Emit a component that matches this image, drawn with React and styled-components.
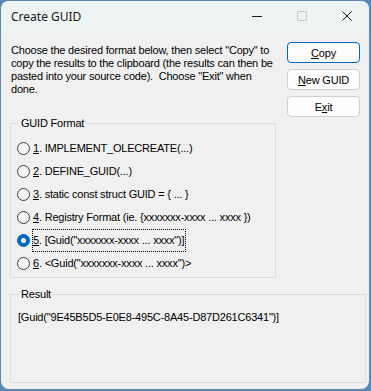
import React from 'react';
import styled, { createGlobalStyle } from 'styled-components';

const GlobalStyle = createGlobalStyle`
  html, body {
    margin: 0;
    padding: 0;
    background: #5a89b5;
  }
  body {
    width: 371px;
    height: 391px;
    overflow: hidden;
  }
`;

const Window = styled.div`
  margin: 1px 0 0 1px;
  width: 368px;
  height: 388px;
  border-radius: 8px;
  overflow: hidden;
  background: #f0f0f0;
  display: flex;
  flex-direction: column;
  font-family: 'Liberation Sans', Arial, sans-serif;
  font-size: 11px;
  letter-spacing: -0.2px;
  color: #000;
`;

const TitleBar = styled.div`
  height: 30px;
  flex: none;
  background: #eef3f3;
  display: flex;
  align-items: center;
  padding-left: 10px;
`;

const Title = styled.div`
  flex: 1;
  font-family: 'Noto Sans', 'Liberation Sans', sans-serif;
  font-size: 12px;
  letter-spacing: 0;
  color: #1a1a1a;
  margin-top: 1px;
`;

const CaptionButton = styled.div`
  width: 45px;
  height: 30px;
  display: flex;
  align-items: center;
  justify-content: center;
  color: ${(p) => (p.$disabled ? '#c4c7c8' : '#1a1a1a')};
`;

const Body = styled.div`
  flex: 1;
  padding: 11px 9px 0 9px;
  display: flex;
  flex-direction: column;
`;

const Top = styled.div`
  display: flex;
  justify-content: space-between;
  align-items: flex-start;
`;

const Intro = styled.p`
  margin: 2px 0 0 1px;
  width: 268px;
  line-height: 13px;
`;

const ButtonColumn = styled.div`
  display: flex;
  flex-direction: column;
  gap: 6px;
`;

const Button = styled.button`
  width: 73px;
  height: 21px;
  box-sizing: border-box;
  background: #fdfdfd;
  border: 1px solid ${(p) => (p.$default ? '#0067c0' : '#d0d0d0')};
  border-radius: 4px;
  font-family: 'Liberation Sans', Arial, sans-serif;
  font-size: 11px;
  letter-spacing: -0.2px;
  color: #000;
  padding: 0;
  u {
    text-underline-offset: 1px;
  }
`;

const Group = styled.fieldset`
  margin: ${(p) => p.$top}px 0 0 0;
  padding: 0;
  border: 1px solid #dcdcdc;
  box-sizing: border-box;
  width: ${(p) => p.$width}px;
  height: ${(p) => p.$height}px;
`;

const Legend = styled.legend`
  margin-left: 8px;
  padding: 0 2px 0 2px;
  line-height: 13px;
`;

const OptionList = styled.div`
  display: flex;
  flex-direction: column;
  padding: 7px 0 0 6px;
`;

const OptionRow = styled.label`
  height: 23px;
  display: flex;
  align-items: center;
  gap: 3px;
`;

const Radio = styled.span`
  width: 13px;
  height: 13px;
  box-sizing: border-box;
  border-radius: 50%;
  border: 1px solid ${(p) => (p.$checked ? '#0067c0' : '#3f3f3f')};
  background: ${(p) => (p.$checked ? '#0067c0' : '#f5f5f5')};
  display: flex;
  align-items: center;
  justify-content: center;
  &::after {
    content: '';
    display: ${(p) => (p.$checked ? 'block' : 'none')};
    width: 5px;
    height: 5px;
    border-radius: 50%;
    background: #fff;
  }
`;

const OptionText = styled.span`
  padding: 4px 1px 4px 0;
  outline: ${(p) => (p.$focused ? '1px dotted #000' : 'none')};
  line-height: 13px;
  white-space: nowrap;
  u {
    text-underline-offset: 1px;
  }
`;

const ResultText = styled.div`
  padding: 10px 0 0 7px;
  line-height: 13px;
`;

const options = [
  'IMPLEMENT_OLECREATE(...)',
  'DEFINE_GUID(...)',
  'static const struct GUID = { ... }',
  'Registry Format (ie. {xxxxxxx-xxxx ... xxxx })',
  '[Guid("xxxxxxx-xxxx ... xxxx")]',
  '<Guid("xxxxxxx-xxxx ... xxxx")>',
];

const App = () => {
  const selected = 4;
  return (
    <>
      <GlobalStyle />
      <Window>
        <TitleBar>
          <Title>Create GUID</Title>
          <CaptionButton>
            <svg width="10" height="10" viewBox="0 0 10 10">
              <path d="M0 5.5h10" stroke="currentColor" strokeWidth="1" />
            </svg>
          </CaptionButton>
          <CaptionButton $disabled>
            <svg width="10" height="10" viewBox="0 0 10 10">
              <rect x="0.5" y="0.5" width="9" height="9" rx="1" fill="none" stroke="currentColor" />
            </svg>
          </CaptionButton>
          <CaptionButton>
            <svg width="10" height="10" viewBox="0 0 10 10">
              <path d="M0.5 0.5l9 9M9.5 0.5l-9 9" stroke="currentColor" strokeWidth="1" />
            </svg>
          </CaptionButton>
        </TitleBar>

        <Body>
          <Top>
            <Intro>
              Choose the desired format below, then select "Copy" to copy the results to the
              clipboard (the results can then be pasted into your source code).&nbsp; Choose
              "Exit" when done.
            </Intro>
            <ButtonColumn>
              <Button $default>
                <u>C</u>opy
              </Button>
              <Button>
                <u>N</u>ew GUID
              </Button>
              <Button>
                E<u>x</u>it
              </Button>
            </ButtonColumn>
          </Top>

          <Group $width={266} $height={161} $top={0}>
            <Legend>GUID Format</Legend>
            <OptionList>
              {options.map((text, i) => (
                <OptionRow key={i}>
                  <Radio $checked={i === selected} />
                  <OptionText $focused={i === selected}>
                    <u>{i + 1}</u>. {text}
                  </OptionText>
                </OptionRow>
              ))}
            </OptionList>
          </Group>

          <Group $width={356} $height={95} $top={10}>
            <Legend>Result</Legend>
            <ResultText>[Guid("9E45B5D5-E0E8-495C-8A45-D87D261C6341")]</ResultText>
          </Group>
        </Body>
      </Window>
    </>
  );
};

export default App;
